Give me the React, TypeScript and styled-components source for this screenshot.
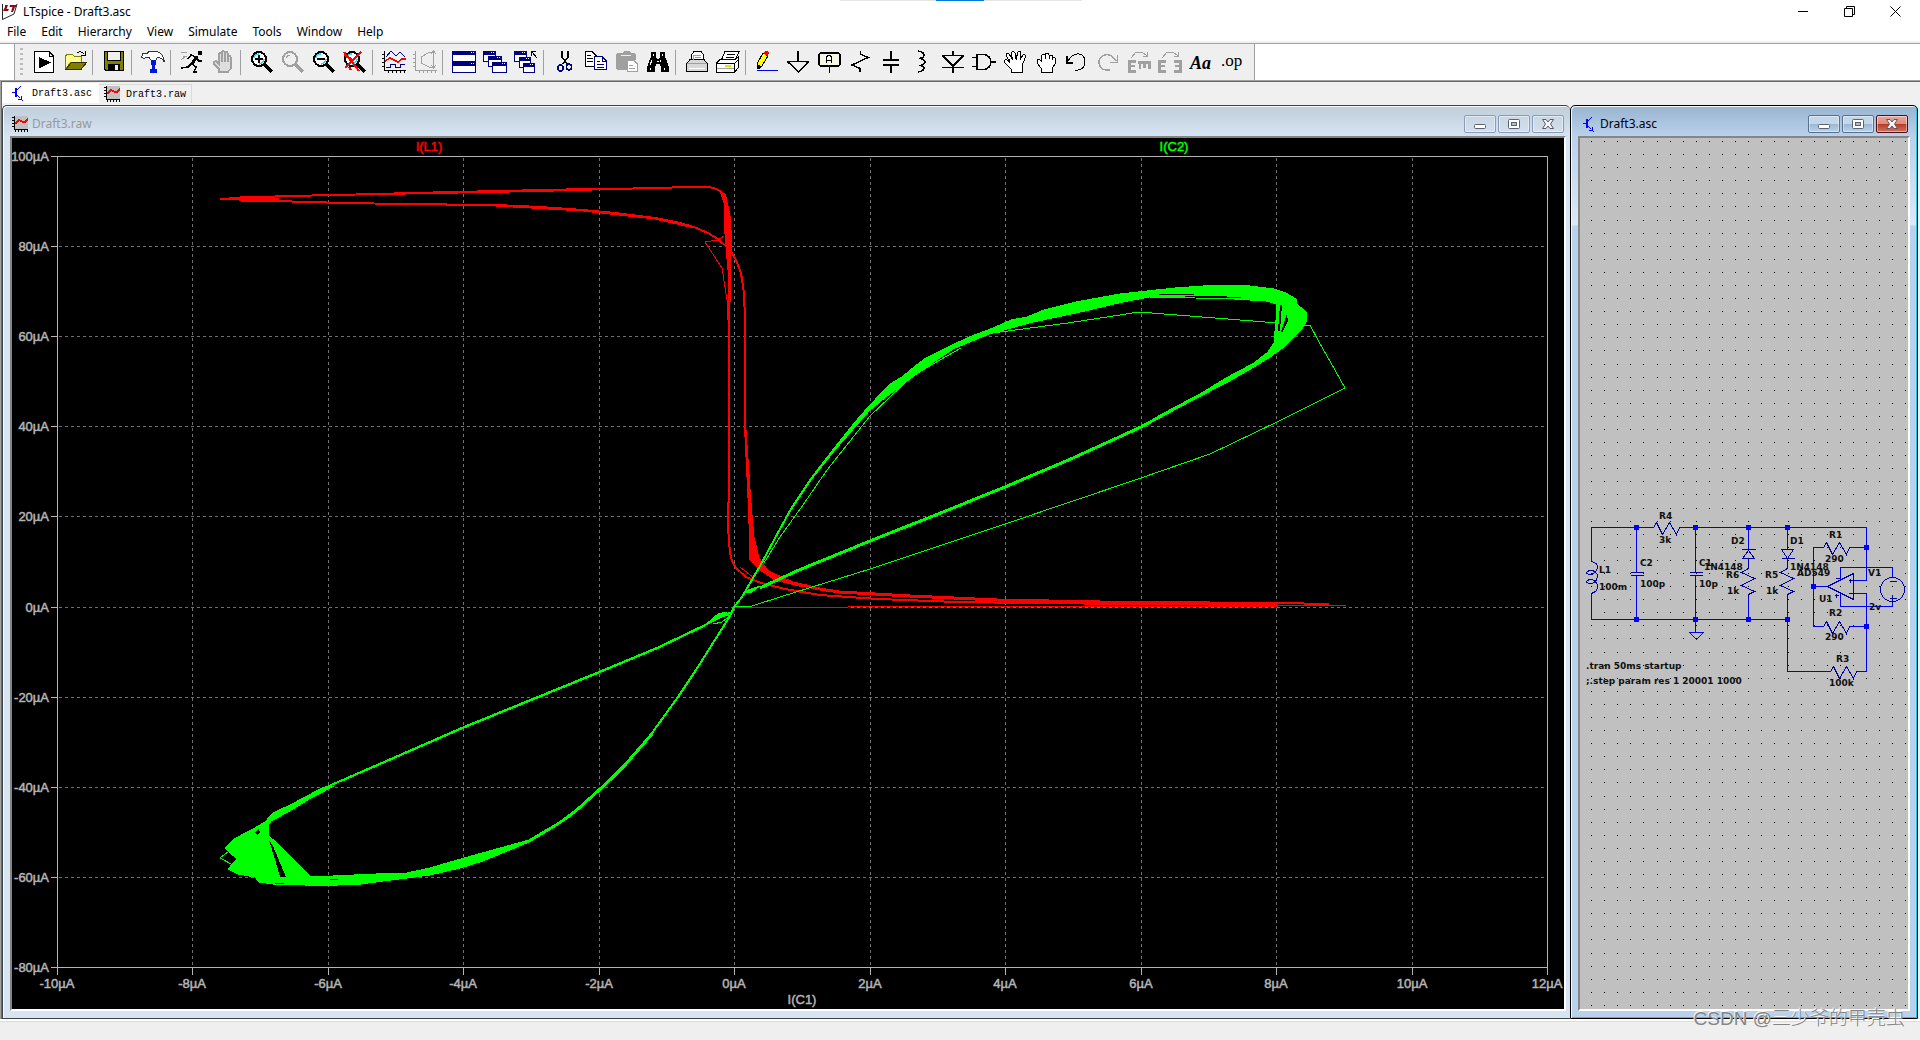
import React from "react";
import styled, { createGlobalStyle, css } from "styled-components";

const UI_FONT = `"Noto Sans", "Open Sans", sans-serif`;

const GlobalStyle = createGlobalStyle`
  *, *::before, *::after { box-sizing: border-box; }
  body { margin: 0; background: #fff; font-family: ${UI_FONT}; font-size: 12px; color: #000; }
  button { font: inherit; color: inherit; border: 0; padding: 0; margin: 0; background: none; }
  svg { display: block; }
`;

/* ---------- application shell ---------- */

const Shell = styled.div`
  position: relative;
  display: flex;
  flex-direction: column;
  height: 100vh;
  min-height: 480px;
  overflow: hidden;
`;

const SnapHint = styled.div`
  position: absolute;
  top: 0;
  left: 50%;
  width: 242px;
  height: 1px;
  margin-left: -120px;
  background: linear-gradient(90deg, #e5e5e5 96px, #0078d7 96px, #0078d7 144px, #e5e5e5 144px);
`;

const TitleBar = styled.header`
  display: flex;
  align-items: center;
  height: 23px;
  padding: 0 2px;
`;

const AppTitle = styled.h1`
  flex: 1;
  margin: 0;
  padding-left: 5px;
  font-size: 12px;
  font-weight: 400;
`;

const CaptionButton = styled.button`
  display: grid;
  place-items: center;
  width: 46px;
  height: 21px;
`;

const MenuBar = styled.nav`
  display: flex;
  gap: 1px;
  height: 18px;
`;

const MenuItem = styled.button`
  padding: 0 7px;
  line-height: 18px;
`;

const ToolStrip = styled.div`
  display: flex;
  height: 39px;
  border-top: 2px solid #f0f0f0;
  box-shadow: inset 0 1px 0 #a0a0a0;
`;

const ToolBar = styled.div`
  display: flex;
  align-items: center;
  margin: 1px 0 0 14px;
  padding: 0 7px 0 5px;
  background: #efefef;
  border: solid #a0a0a0;
  border-width: 0 1px;
`;

const Grip = styled.span`
  width: 3px;
  height: 28px;
  margin-right: 5px;
  background: repeating-linear-gradient(#bdbdbd 0 2px, transparent 2px 5px);
`;

const ToolButton = styled.button`
  display: grid;
  place-items: center;
  width: 31px;
  height: 32px;
`;

const Separator = styled.span`
  width: 1px;
  height: 25px;
  margin: 0 5px 0 2px;
  background: #a0a0a0;
`;

const Client = styled.main`
  display: flex;
  flex: 1;
  flex-direction: column;
  min-height: 0;
  padding-right: 2px;
  border-top: 1px solid #a0a0a0;
  border-left: 1px solid #a0a0a0;
  background: #f0f0f0;
  box-shadow: inset 1px 1px 0 #696969;
`;

const TabStrip = styled.div`
  display: flex;
  align-items: flex-end;
  height: 24px;
  margin-left: 1px;
  padding: 1px 0 2px;
`;

const Tab = styled.button<{ $active?: boolean }>`
  display: flex;
  align-items: center;
  gap: ${(p) => (p.$active ? 7 : 6)}px;
  height: ${(p) => (p.$active ? 20 : 19)}px;
  padding: 0 ${(p) => (p.$active ? 7 : 5)}px;
  font-family: "Liberation Mono", monospace;
  font-size: 10px;
  ${(p) =>
    p.$active
      ? css`background: #fff;`
      : css`
          border: solid #dadada;
          border-width: 1px 1px 0 0;
        `}
`;

const Desktop = styled.div`
  display: grid;
  flex: 1;
  grid-template-columns: minmax(0, 1fr) 348px;
  min-height: 0;
  margin-left: 1px;
`;

/* ---------- MDI child windows ---------- */

const ChildFrame = styled.section<{ $active?: boolean }>`
  display: flex;
  flex-direction: column;
  min-height: 0;
  padding: 1px ${(p) => (p.$active ? 7 : 4)}px 7px 7px;
  border: solid #3c4448;
  border-width: 1px 0 1px 1px;
  border-radius: 5px 5px 0 0;
  background: ${(p) =>
    p.$active
      ? "linear-gradient(#99b4d1 0, #b9d1ea 30px, #dce8f5 119px, #b9d1ea 120px)"
      : "linear-gradient(#bfcddb 0, #d7e4f2 30px)"};
  box-shadow: inset 1px 1px 0 #f4f9fd;
  ${(p) =>
    p.$active &&
    css`
      border-color: #000;
      border-right-width: 1px;
      box-shadow: inset 1px 1px 0 #f4f9fd, inset -1px -1px 0 #21c7ea;
    `}
`;

const ChildTitle = styled.header<{ $active?: boolean }>`
  display: flex;
  align-items: center;
  gap: 2px;
  height: 29px;
  padding: 8px 2px 3px 2px;
  color: ${(p) => (p.$active ? "#000" : "#999")};
`;

const ChildName = styled.h2`
  flex: 1;
  margin: 0;
  padding-left: 2px;
  font-size: 12px;
  font-weight: 400;
  line-height: 18px;
`;

const FrameButton = styled.button<{ $tone: "idle" | "blue" | "red" }>`
  display: grid;
  place-items: center;
  width: 32px;
  height: 18px;
  border: 1px solid
    ${(p) => ({ idle: "#8b9ab8", blue: "#56708f", red: "#4a1218" })[p.$tone]};
  border-radius: 2px;
  background: ${(p) =>
    ({
      idle: "linear-gradient(#c9d6e4, #d3dfec)",
      blue: "linear-gradient(#c3d6ea 0 8px, #9bb6d3 8px, #b9d3ec)",
      red: "linear-gradient(#eaa79b, #dc8a7b 8px, #b83a24 8px, #d2725f)",
    })[p.$tone]};
  box-shadow: inset 0 0 0 1px rgba(255, 255, 255, 0.45);
`;

const ChildBody = styled.div<{ $fill: string }>`
  flex: 1;
  min-height: 0;
  border: 2px solid;
  border-color: #858585 #fff #fff #858585;
  background: ${(p) => p.$fill};
  overflow: hidden;
`;

const Drawing = styled.svg`
  width: 100%;
  height: 100%;
`;

const AxisText = styled.text<{ $color?: string }>`
  fill: ${(p) => p.$color ?? "#b4b4b4"};
  stroke: ${(p) => p.$color ?? "#b4b4b4"};
  stroke-width: 0.5px;
  font: 13px "Liberation Sans", Arial, sans-serif;
`;

const PartText = styled.text`
  fill: #101010;
  font: bold 9px "DejaVu Sans", Verdana, sans-serif;
`;

const StatusBar = styled.footer`
  height: 21px;
  border-top: 2px solid #fff;
  background: #efefef;
  box-shadow: inset 0 1px 0 #dcdcd8;
`;

const Watermark = styled.div`
  position: absolute;
  right: 15px;
  bottom: 6px;
  font-family: "Liberation Sans", "Noto Sans CJK SC", sans-serif;
  font-size: 19px;
  font-weight: 300;
  line-height: 30px;
  color: #858585;
  text-shadow: -1px -1px 0 #f6f6f6;
  white-space: nowrap;
`;

/* ---------- icons ---------- */

const BLACK = "#000";
const NAVY = "#000080";
const DIM = "#a0a0a0";

function Magnifier({ color = BLACK, glass = true, children }: { color?: string; glass?: boolean; children?: React.ReactNode }) {
  return (
    <>
      <circle cx="9" cy="9" r="7" fill={glass ? "#fff" : "none"} stroke={color} strokeWidth="2" />
      {glass && <path d="M4 8q1-4 5-4M9 14q4 0 5-5" fill="none" stroke="#20e0f0" strokeWidth="1.500" />}
      {!glass && <path d="M5 8q1-3 4-3" fill="none" stroke={color} />}
      <path d="M14 14L22 22" stroke={color} strokeWidth="3" />
      {children}
    </>
  );
}

function MiniWindow({ x, y, w = 13, h = 10 }: { x: number; y: number; w?: number; h?: number }) {
  return (
    <>
      <rect x={x + 0.5} y={y + 0.5} width={w} height={h} fill="#fff" stroke={NAVY} />
      <rect x={x} y={y} width={w + 1} height="4" fill={NAVY} />
      <rect x={x + w - 4} y={y + 1} width="1" height="1" fill="#fff" />
      <rect x={x + w - 2} y={y + 1} width="1" height="1" fill="#fff" />
    </>
  );
}

const icons: Record<string, React.ReactNode> = {
  run: (
    <>
      <path d="M2.500 1.500H17L21.500 6V22.500H2.500Z" fill="#fff" stroke={BLACK} />
      <path d="M17 1.500V6H21.500" fill="none" stroke={BLACK} />
      <path d="M7 7L19 12.500L7 18.500Z" />
    </>
  ),
  open: (
    <>
      <path d="M2.500 19V6L4.500 4H9L11 6H18.500V12H8Z" fill="#ffff90" stroke="#808000" />
      <path d="M2.500 19.500L8.500 12.500H23.500L18 19.500Z" fill="#808000" stroke="#303000" />
      <path d="M14 3Q18 0 21 4M22.500 1V5.500H18" fill="none" stroke={BLACK} />
    </>
  ),
  save: (
    <>
      <path d="M2.500 1.500H21.500V20.500H4L2.500 19Z" fill="#808000" stroke={BLACK} />
      <rect x="5.500" y="1.500" width="13" height="9" fill="#efefef" stroke={BLACK} />
      <rect x="6" y="14" width="12" height="7" />
      <rect x="13" y="15" width="3" height="5" fill="#efefef" />
    </>
  ),
  hammer: (
    <>
      <path d="M.5 7L2 3.500H6L8 1.500H15Q22 2 23.500 12Q20 7 16.500 7.500L15 10H10L8 7.500H5L3 9Z" fill="#fff" stroke="#333" />
      <path d="M10 10H15V15H14V19H16V23H9V19H11V15H10Z" fill="#0016d8" />
    </>
  ),
  runner: (
    <>
      <rect x="18" y="1" width="4" height="4" />
      <path d="M17 6L12 14" stroke={BLACK} strokeWidth="3" />
      <path d="M16 7L11 5L8 9M16 8L19 11H22M12 14L16 17L14 22H17M11 14L8 17L1 18" fill="none" stroke={BLACK} strokeWidth="1.500" />
      <path d="M1 2L5 3L7 2M3 6H7M1 10L6 6" fill="none" stroke={DIM} />
    </>
  ),
  halt: (
    <path
      d="M8 22V19L3 14V12L5 11L8 14V4L9 3L11 4V11V2L12 1L14 2V11V3L16 2L17 4V11V7L19 6L20 8V18L17 22ZM11 12V4M14 12V3M17 12V5"
      fill="#dedede"
      stroke={DIM}
      strokeWidth="1.500"
    />
  ),
  zoomIn: (
    <Magnifier>
      <path d="M9 5V13M5 9H13" stroke={BLACK} strokeWidth="2" />
    </Magnifier>
  ),
  zoomPan: <Magnifier color={DIM} glass={false} />,
  zoomOut: (
    <Magnifier>
      <path d="M5 9H13" stroke={BLACK} strokeWidth="2" />
    </Magnifier>
  ),
  zoomFit: (
    <Magnifier>
      <path d="M1 2L16 21M18 2L2 18M1 5L10 10M8 20L6 17" stroke="#f00" strokeWidth="2" />
    </Magnifier>
  ),
  traces: (
    <>
      <path d="M2.500 1V20.500H24M0 4.500H3M0 8.500H3M0 12.500H3M0 16.500H3M6.500 20V23M10.500 20V23M14.500 20V23M18.500 20V23M22.500 20V23" fill="none" stroke={BLACK} />
      <path d="M4 7L9 1L14 6L18 2L23 7M4 17H8V14.500H13V17H18V14.500H23" fill="none" stroke={NAVY} />
      <path d="M3 11L8 8L12 10L16 12L20 9H24" fill="none" stroke="#f00" strokeWidth="1.500" />
    </>
  ),
  tracesOff: (
    <>
      <path d="M2.500 1V20.500H24M0 4.500H3M0 8.500H3M0 12.500H3M0 16.500H3M6.500 20V23M10.500 20V23M14.500 20V23M18.500 20V23M22.500 20V23" fill="none" stroke={DIM} />
      <path d="M22 2.500H16L8 7V13L16 17H22M20.500 2V17M18 4L20.500 1L23 4M18 15L20.500 18L23 15" fill="none" stroke={DIM} />
    </>
  ),
  tile: (
    <>
      <MiniWindow x={0} y={1} w={23} h={10} />
      <MiniWindow x={0} y={12} w={23} h={10} />
    </>
  ),
  cascade: (
    <>
      <MiniWindow x={0} y={1} w={12} />
      <MiniWindow x={5} y={6} w={13} />
      <MiniWindow x={9} y={12} w={14} />
    </>
  ),
  closeAll: (
    <>
      <MiniWindow x={0} y={1} w={12} />
      <MiniWindow x={5} y={7} w={11} />
      <MiniWindow x={9} y={13} w={11} h={9} />
      <path d="M17 6V1.500H22M18 2L23 8" fill="none" stroke={BLACK} />
    </>
  ),
  cut: (
    <>
      <path d="M9 1V7L14 14M15 1V7L10 14" fill="none" stroke={BLACK} strokeWidth="1.500" />
      <ellipse cx="7.500" cy="18" rx="2.500" ry="3" fill="none" stroke={NAVY} strokeWidth="1.500" />
      <ellipse cx="16" cy="17" rx="2.500" ry="3" fill="none" stroke={NAVY} strokeWidth="1.500" />
    </>
  ),
  copy: (
    <>
      <path d="M1.500 1.500H8L12.500 6V16.500H1.500Z" fill="#fff" stroke={BLACK} />
      <path d="M3 5.500H7M3 8.500H9M3 11.500H9" stroke={BLACK} />
      <path d="M10.500 6.500H18L22.500 11V19.500H10.500Z" fill="#fff" stroke={NAVY} />
      <path d="M18 6.500V11H22M13 11.500H16M13 14.500H20M13 17H20" fill="none" stroke={NAVY} />
    </>
  ),
  paste: (
    <>
      <path d="M1 4L3 3H7L9 1H14L16 3H20L21 5V10H13V20H3L1 19Z" fill={DIM} />
      <rect x="6" y="5" width="10" height="1" fill="#efefef" />
      <path d="M12.500 10.500H19L22.500 14V21.500H12.500Z" fill="#fff" stroke={DIM} />
      <path d="M14 15.500H18M14 18.500H20" stroke={DIM} />
    </>
  ),
  find: (
    <>
      <path d="M5 2H10V7L11 9H13L14 7V2H19V7L21 11L23 18V22H15V16H14V14H10V16H9V22H1V18L3 11L5 7Z" />
      <path d="M7 4V6M16 4V6M6 10L4 15M15 10L14 12M4 18V20M18 18V20M11 11H13" stroke="#fff" />
    </>
  ),
  print: (
    <>
      <path d="M6.500 11V5L9 1.500H16L18.500 5V11" fill="#fff" stroke={BLACK} />
      <path d="M5 9.500H19L22.500 14V21.500H1.500V14Z" fill="#d8d8d8" stroke={BLACK} />
      <path d="M8.500 9.500V5.500H16M10 7.500H16M2 13.500H22" fill="none" stroke={DIM} />
      <path d="M4 18.500H20" stroke="#fff" />
    </>
  ),
  printSetup: (
    <>
      <path d="M5 11L9 1.500H23L19 11Z" fill="#fff" stroke={BLACK} />
      <path d="M11 4.500H19M10 7.500H18" stroke={BLACK} />
      <path d="M.5 13L4 9.500H19L22.500 7V17L18.500 22.500H.5Z" fill="#fff" stroke={BLACK} />
      <path d="M.5 13.500H18.500V22.500M18.500 13.500L23 9" fill="none" stroke={BLACK} />
      <path d="M1 18.500H18" stroke={DIM} />
      <rect x="9" y="15" width="6" height="2" fill="#e8e000" />
    </>
  ),
  wire: (
    <>
      <path d="M2 14L8 3L13 6L7 16L2 19Z" fill="#ff0" stroke={BLACK} />
      <path d="M8 3L10 1H13L14 3L13 6Z" fill="#f00" />
      <path d="M2 15V19H5L7 16Z" />
      <path d="M2 20.500H23" stroke="#0000ff" />
    </>
  ),
  ground: <path d="M12 1V12M1 11.500H23M2 12L12.500 22L22 12" fill="none" stroke={BLACK} strokeWidth="1.500" />,
  label: (
    <>
      <rect x="2" y="3" width="21" height="13" rx="2" fill="#f8f8e8" stroke={BLACK} strokeWidth="1.500" />
      <path d="M9.500 13V7L11 5.500H13L14.500 7V13M9 10.500H15" fill="none" stroke={BLACK} strokeWidth="1.500" />
      <path d="M12.500 16V23" stroke={BLACK} />
    </>
  ),
  resistor: <path d="M12.500 1V4L20 7.500L4 15L12 18.500V22" fill="none" stroke={BLACK} strokeWidth="1.500" />,
  capacitor: <path d="M12 1V9M12 15V23M4 10H20M4 15H20" stroke={BLACK} strokeWidth="2" />,
  inductor: <path d="M8 1Q14 2 14 5Q14 8 9 8.500Q15 9 15 12Q15 15 9 15.500Q14 16 14 18.500Q13 21.500 8 22" fill="none" stroke={BLACK} strokeWidth="1.500" />,
  diode: <path d="M12 1V5M12 17V23M1 5.500H23M2 6L12 16L22 6M1 17.500H23" fill="none" stroke={BLACK} strokeWidth="1.500" />,
  gate: <path d="M0 7.500H5M0 16.500H5M5 4.500H12Q18 5 19 12Q18 19 12 19.500H5ZM19 12H24" fill="none" stroke={BLACK} strokeWidth="1.500" />,
  move: (
    <>
      <path d="M8 22V19L1 12Q1 9 4 10L7 13L3 5Q4 2 6 4L10 10L8 3Q10 0 12 3L13 9L15 2Q17 0 18 3L17 10L20 5Q23 4 22 8L19 16V22Z" fill="#fff" stroke={BLACK} />
      <path d="M7 13L6 9M13 10V5M17 10L18 6" stroke={BLACK} />
    </>
  ),
  drag: (
    <>
      <path d="M7 22V18L3 13V10L5 9L7 11V6L9 4L11 5L12 3H14L15 5L18 5V7L21 8V14L18 19V22Z" fill="#fff" stroke={BLACK} />
      <path d="M7 12V8M11 9V5M15 9V5M18 10V7" stroke={BLACK} />
    </>
  ),
  undo: (
    <>
      <path d="M3 11Q8 3 14 4Q20 5 20 12Q20 19 13 20L10 20" fill="none" stroke={BLACK} />
      <path d="M1.500 6V12.500H8" fill="none" stroke={BLACK} strokeWidth="2" />
    </>
  ),
  redo: (
    <>
      <path d="M20 11Q15 3 9 5Q3 7 3 12Q3 19 10 20H14" fill="none" stroke={DIM} strokeWidth="1.500" />
      <path d="M21.500 5V12.500H14" fill="none" stroke={DIM} strokeWidth="1.500" />
    </>
  ),
  rotate: (
    <>
      <path d="M4 8L9 2H15L20 6M20.500 2V6.500H16" fill="none" stroke={DIM} />
      <path d="M9 11.500H2.500V21.500H9M3 16H8M11 12.500H24M13 12V19M17.500 12V18M22.500 12V19" fill="none" stroke={DIM} strokeWidth="2.500" />
    </>
  ),
  mirror: (
    <>
      <path d="M4 8L9 2H15L20 6M20.500 2V6.500H16" fill="none" stroke={DIM} />
      <path d="M8 11.500H1.500V21.500H8M2 16H7M16 11.500H22.500V21.500H16M17 16H22" fill="none" stroke={DIM} strokeWidth="2.500" />
    </>
  ),
  text: (
    <text x="1" y="19" fontFamily="Liberation Serif, serif" fontSize="18" fontWeight="700" fontStyle="italic">
      Aa
    </text>
  ),
  directive: (
    <text x="1" y="16" fontFamily="Liberation Serif, serif" fontSize="17">
      .op
    </text>
  ),
};

const toolGroups: [string, string][][] = [
  [["run", "New Schematic"], ["open", "Open"]],
  [["save", "Save"]],
  [["hammer", "Control Panel"]],
  [["runner", "Run"], ["halt", "Halt"]],
  [["zoomIn", "Zoom to rectangle"], ["zoomPan", "Pan"], ["zoomOut", "Zoom back"], ["zoomFit", "Zoom full extents"]],
  [["traces", "Autorange"], ["tracesOff", "Pick visible traces"]],
  [["tile", "Tile windows"], ["cascade", "Cascade windows"], ["closeAll", "Close all windows"]],
  [["cut", "Cut"], ["copy", "Copy"], ["paste", "Paste"], ["find", "Find"]],
  [["print", "Print"], ["printSetup", "Print Setup"]],
  [
    ["wire", "Wire"], ["ground", "Ground"], ["label", "Label Net"], ["resistor", "Resistor"],
    ["capacitor", "Capacitor"], ["inductor", "Inductor"], ["diode", "Diode"], ["gate", "Component"],
    ["move", "Move"], ["drag", "Drag"], ["undo", "Undo"], ["redo", "Redo"],
    ["rotate", "Rotate"], ["mirror", "Mirror"], ["text", "Text"], ["directive", "SPICE Directive"],
  ],
];

function PlotIcon() {
  return (
    <svg width="16" height="16" viewBox="0 0 16 16" shapeRendering="crispEdges">
      <rect x="2" width="14" height="13" fill="#c0c0c0" />
      <path d="M2.500 0V13.500H16M0 1.500H2M0 4.500H2M0 7.500H2M0 10.500H2M3.500 13V16M6.500 13V16M9.500 13V16M12.500 13V16M15.500 13V16" fill="none" stroke="#000" />
      <path d="M3 8L7 4L11 6H13L16 3" fill="none" stroke="#f00" strokeWidth="1.500" />
    </svg>
  );
}

function TransistorIcon() {
  return (
    <svg width="16" height="16" viewBox="0 0 16 16" shapeRendering="crispEdges">
      <path d="M3 7.500H6M7 6L12 1M7 9L11 13M12.500 11V14.500H9M12 14L14 16" fill="none" stroke="#00f" />
      <path d="M7 3V12" stroke="#00f" strokeWidth="2" />
    </svg>
  );
}

function LogoIcon() {
  return (
    <svg width="16" height="17" viewBox="0 0 16 17">
      <path d="M.5 1V16.500L12 11L15 1" fill="#fff" stroke="#222" />
      <path d="M3 2H6L4.500 6H7L6 8H1L3 4ZM8 2H15L14 4H13L11 9H9L10.500 4H7.500Z" fill="#8a0c14" />
    </svg>
  );
}

/* ---------- waveform plot ---------- */

const xTicks = Array.from({ length: 12 }, (_, i) => ({ at: 57 + Math.round((i * 1490) / 11), label: `${i * 2 - 10}µA` }));
const yTicks = Array.from({ length: 10 }, (_, i) => ({ at: 156 + Math.round((i * 811) / 9), label: `${100 - i * 20}µA` }));

function Waveforms() {
  return (
    <Drawing viewBox="12 138 1552 871" role="img" aria-label="Waveform plot">
      <g shapeRendering="crispEdges" fill="none">
        <g transform="translate(.5 .5)">
          <g stroke="#707070" strokeDasharray="3 3">
            {xTicks.slice(1, -1).map((t) => <path key={t.at} d={`M${t.at} 157V967`} />)}
            {yTicks.slice(1, -1).map((t) => <path key={t.at} d={`M58 ${t.at}H1547`} />)}
          </g>
          <g stroke="#b4b4b4">
            <path d="M57 156H1547V967H57Z" />
            {xTicks.map((t) => <path key={t.at} d={`M${t.at} 967V974`} />)}
            {yTicks.map((t) => <path key={t.at} d={`M50 ${t.at}H57`} />)}
          </g>
        </g>
        <g stroke="#f00" strokeLinejoin="round">
          <path strokeWidth="2" d="M220 199L257 197L330 195L433 193L536 191L611 189L655 188L690 187H708L714 188L720 191L725 195L730 218L731 252" />
          <path strokeWidth="2" d="M220 199L257 200L303 202L398 204L496 205L540 207L583 210L615 213L655 218L680 223L694 227L708 233L718 239L730 250L736 260L741 273L744 293L745 320V427L748 487L751 550L757 566" />
          <path d="M240 197L433 192L611 188M240 201L496 206L583 211L655 219L694 228" />
          <path fill="#f00" d="M230 199L257 197L279 199L257 200Z" />
          <path fill="#f00" d="M720 191L725 195L729 214L731 230L731 252L730 303L728 270L726 247L724 220L724 203Z" />
          <path strokeWidth="2" d="M729 250V500L728 505V527L730 553L732 561L736 568L746 577L761 583L785 589L820 595L878 599L957 602L1029 603L1135 604L1278 605" />
          <path fill="#f00" d="M746 430L751 503L754 537L759 558L769 572L793 582L820 588L799 586L775 580L760 570L750 560L748 487Z" />
          <path strokeWidth="3" d="M760 565L770 573L793 583L820 589L839 592L910 596L997 600L1100 602L1210 603" />
          <path strokeWidth="2" d="M1210 603H1278L1329 604" />
          <path d="M1278 605H1346M734 607.500H848M848 606.500H1278" />
          <path d="M724 236L718 240L705 242L722 268L727 300L729 340M740 567L754 578" />
        </g>
        <g stroke="#0f0" strokeLinejoin="round">
          <path
            fill="#0f0"
            d="M742 597L760 565L774 540L791 508L811 478L835 447L855 422L870 405L890 384L902 377L914 367L926 358L942 350L969 337L993 328L1011 320L1027 317L1044 310L1076 302L1120 294L1147 291L1175 288L1203 286L1218 285H1242L1258 287L1274 289L1286 293L1296 299V304L1303 309L1307 313L1306 322L1301 330L1284 347L1270 357L1254 367L1226 383L1187 403L1141 427L1155 418L1175 407L1200 394L1226 378L1254 363L1268 352L1274 343L1276 320L1277 304L1266 301L1234 299L1195 298L1149 297L1123 302L1076 313L1033 322L989 334L953 349L926 367L906 382L886 397L870 410L855 427L835 450L811 480L791 510L774 541L760 566Z"
          />
          <path strokeWidth="2" d="M734 607L742 597L760 566L774 540L791 509L811 479" />
          <path strokeWidth="3" d="M1187 402L1141 427L1073 458L1005 487L938 514L870 541L799 570L760 588" />
          <path fill="#0f0" d="M745 591L760 586L752 592H745Z" />
          <path d="M993 333L1068 323L1139 312L1278 323M1304 325H1310L1319 342L1331 363L1345 388L1277 422L1210 454L1141 478L1005 524L870 569L780 597L752 606L736 607" />
          <path d="M961 348L926 368L910 378L870 416L827 470L803 505L780 537L764 563" />
          <path strokeWidth="2" d="M735 605L730 616L713 643L696 670L678 697L652 733L625 765L598 791L579 808L556 825L529 841" />
          <path strokeWidth="3" d="M652 734L638 750L625 765L611 779L598 791L579 808L568 817L556 825L529 841" />
          <path strokeWidth="2" d="M322 789L361 772L464 727L599 672L659 647L705 625L722 615L730 613" />
          <path d="M340 782L464 728L599 673L659 648L705 626" />
          <path fill="#0f0" d="M529 840L464 858L430 868L407 873L376 874L311 877L284 850L268 835V826L271 821L288 812L311 798L334 786L322 788L292 804L273 813L265 822L253 829L234 839L225 848L237 859L228 869L238 874L255 877L259 882L273 884L305 885H338L361 884L391 880L430 875L460 868L483 861L529 842Z" />
          <path d="M228 852L220 858L233 865M713 624L722 622L730 616M708 624L718 619L728 614" />
          <path fill="#0f0" d="M705 625L718 614L726 612L729 615L716 618Z" />
        </g>
        <g fill="#000">
          <path d="M269 840L273 846L286 877H280L276 863ZM255 832L259 829L260 832L257 835ZM330 879H338V880H330ZM275 883H284V884H275Z" />
          <path d="M1280 305H1282L1280 331H1278ZM1287 314L1288 321L1282 333L1281 331ZM1159 294H1194V295H1159ZM1180 296H1213L1241 297V298H1200Z" />
        </g>
      </g>
      {xTicks.map((t) => <AxisText key={t.at} x={t.at} y="988" textAnchor="middle">{t.label}</AxisText>)}
      {yTicks.map((t) => <AxisText key={t.at} x="49" y={t.at + 5} textAnchor="end">{t.label}</AxisText>)}
      <AxisText x="802" y="1004" textAnchor="middle">I(C1)</AxisText>
      <AxisText x="429" y="151" textAnchor="middle" $color="#f00">I(L1)</AxisText>
      <AxisText x="1174" y="151" textAnchor="middle" $color="#0f0">I(C2)</AxisText>
    </Drawing>
  );
}

/* ---------- schematic ---------- */

const gridDots = Array.from({ length: 25 * 67 }, (_, i) => {
  const x = 1591 + Math.round(((i % 25) * 131) / 10);
  const y = 141 + Math.round((Math.floor(i / 25) * 1309) / 100);
  return `M${x} ${y}h1v1h-1z`;
}).join("");

const junctions = [
  [1636, 527], [1695, 527], [1748, 527], [1787, 527], [1866, 547], [1813, 586],
  [1866, 626], [1636, 619], [1695, 619], [1748, 619], [1787, 619],
];

const parts: [number, number, string][] = [
  [1659, 519, "R4"], [1659, 543, "3k"], [1640, 566, "C2"], [1640, 587, "100p"],
  [1599, 573, "L1"], [1599, 590, "100m"], [1699, 566, "C1"], [1699, 587, "10p"],
  [1731, 544, "D2"], [1704, 570, "1N4148"], [1726, 578, "R6"], [1727, 594, "1k"],
  [1790, 544, "D1"], [1790, 570, "1N4148"], [1765, 578, "R5"], [1766, 594, "1k"],
  [1829, 538, "R1"], [1825, 562, "290"], [1797, 576, "AD549"], [1819, 602, "U1"],
  [1868, 576, "V1"], [1869, 610, "2v"], [1829, 616, "R2"], [1825, 640, "290"],
  [1836, 662, "R3"], [1829, 686, "100k"], [1586, 669, ".tran 50ms startup"],
  [1586, 684, ";.step param res 1 20001 1000"],
];

const zigH = (x: number, y: number) => `M${x} ${y}l3 -5l6 12l7 -12l7 12l3 -7`;
const zigV = (x: number, y: number) => `M${x} ${y}v3l-7 4l13 6l-13 7l13 6l-6 3v3`;

function Schematic() {
  return (
    <Drawing viewBox="1580 138 328 871" role="img" aria-label="Circuit schematic">
      <g shapeRendering="crispEdges">
        <path d={gridDots} />
        <g transform="translate(.5 .5)" fill="none">
          <g stroke="#0000f0">
            <path d="M1653 527H1591V561M1591 593V619H1787M1679 527H1866V580H1853M1636 527V572M1636 575V619M1695 527V572M1695 575V632" />
            <path d="M1748 527V549M1748 597V619M1787 527V549M1787 597V671H1830M1856 671H1866V593H1853" />
            <path d="M1823 547H1813V626H1823M1849 547H1866M1849 626H1866M1813 586H1827M1840 580V567H1892V576M1840 593V606H1892V602" />
            <path d="M1689 632H1703L1696 639Z" />
          </g>
          <g stroke="#0000a0">
            <path d="M1591 561Q1597 562 1597 567Q1596 572 1591 574Q1586 574 1586 572Q1587 570 1592 570Q1597 572 1597 576Q1596 582 1591 583Q1586 583 1586 581Q1587 579 1592 579Q1597 582 1597 586Q1597 591 1591 593" />
            <path d="M1630 572H1643M1630 575H1643M1689 572H1702M1689 575H1702" />
            <path d="M1741 549H1755M1742 558H1754L1748 550ZM1748 558V565M1781 558H1794M1781 549H1793L1787 558ZM1787 558V565" />
            <path d={zigH(1653, 527) + zigH(1823, 547) + zigH(1823, 626) + zigH(1830, 671) + zigV(1748, 565) + zigV(1787, 565)} />
            <path d="M1827 586L1853 573V599ZM1835 578H1839M1834 595H1838M1836 593V597M1848 580H1852M1850 578V582M1848 593H1852" />
            <path d="M1889 581H1896M1889 598H1896M1892 594V602" />
            <circle cx="1892" cy="589" r="12" />
          </g>
        </g>
        {junctions.map(([x, y]) => <rect key={`${x}-${y}`} x={x - 2} y={y - 2} width="5" height="5" fill="#00f" />)}
      </g>
      {parts.map(([x, y, label]) => <PartText key={`${x}-${y}`} x={x} y={y}>{label}</PartText>)}
    </Drawing>
  );
}

/* ---------- window pieces ---------- */

function FrameButtons({ active }: { active?: boolean }) {
  const tone = active ? "blue" : "idle";
  return (
    <>
      <FrameButton $tone={tone} aria-label="Minimize">
        <svg width="12" height="12" viewBox="0 0 12 12"><rect x=".5" y="6.500" width="11" height="4" rx="1" fill="#fff" stroke="#5c6270" /></svg>
      </FrameButton>
      <FrameButton $tone={tone} aria-label="Maximize">
        <svg width="12" height="12" viewBox="0 0 12 12">
          <rect x=".5" y="1.500" width="11" height="9" rx="1" fill="#fff" stroke="#5c6270" />
          <rect x="3.500" y="4.500" width="5" height="3" fill="#a8bdd5" stroke="#5c6270" />
        </svg>
      </FrameButton>
      <FrameButton $tone={active ? "red" : "idle"} aria-label="Close">
        <svg width="12" height="12" viewBox="0 0 12 12"><path d="M.5 1.500H4L6 4L8 1.500H11.500L8.500 6L11.500 10.500H8L6 8L4 10.500H.5L3.500 6Z" fill="#f4f4f4" stroke="#5c5866" /></svg>
      </FrameButton>
    </>
  );
}

export default function App() {
  return (
    <>
      <GlobalStyle />
      <Shell>
        <TitleBar>
          <LogoIcon />
          <AppTitle>LTspice - Draft3.asc</AppTitle>
          <CaptionButton aria-label="Minimize"><svg width="11" height="11"><path d="M0 5.500H10" stroke="#000" /></svg></CaptionButton>
          <CaptionButton aria-label="Restore"><svg width="11" height="11"><path d="M.5 2.500H8.500V10.500H.5ZM2.500 2.500V.5H10.500V8.500H8.500" fill="none" stroke="#000" /></svg></CaptionButton>
          <CaptionButton aria-label="Close"><svg width="11" height="11"><path d="M.5.5L10.500 10.500M10.500.5L.5 10.500" stroke="#000" /></svg></CaptionButton>
        </TitleBar>
        <MenuBar>
          {["File", "Edit", "Hierarchy", "View", "Simulate", "Tools", "Window", "Help"].map((m) => <MenuItem key={m}>{m}</MenuItem>)}
        </MenuBar>
        <ToolStrip>
          <ToolBar role="toolbar">
            <Grip />
            {toolGroups.map((group, i) => (
              <React.Fragment key={i}>
                {i > 0 && <Separator />}
                {group.map(([id, name]) => (
                  <ToolButton key={id} aria-label={name}>
                    <svg width="24" height="24" viewBox="0 0 24 24" shapeRendering="crispEdges">{icons[id]}</svg>
                  </ToolButton>
                ))}
              </React.Fragment>
            ))}
          </ToolBar>
        </ToolStrip>
        <Client>
          <TabStrip>
            <Tab $active><TransistorIcon />Draft3.asc</Tab>
            <Tab><PlotIcon />Draft3.raw</Tab>
          </TabStrip>
          <Desktop>
            <ChildFrame>
              <ChildTitle>
                <PlotIcon />
                <ChildName>Draft3.raw</ChildName>
                <FrameButtons />
              </ChildTitle>
              <ChildBody $fill="#000"><Waveforms /></ChildBody>
            </ChildFrame>
            <ChildFrame $active>
              <ChildTitle $active>
                <TransistorIcon />
                <ChildName>Draft3.asc</ChildName>
                <FrameButtons active />
              </ChildTitle>
              <ChildBody $fill="#c0c0c0"><Schematic /></ChildBody>
            </ChildFrame>
          </Desktop>
        </Client>
        <StatusBar />
        <SnapHint />
        <Watermark>CSDN @三少爷的甲壳虫</Watermark>
      </Shell>
    </>
  );
}
